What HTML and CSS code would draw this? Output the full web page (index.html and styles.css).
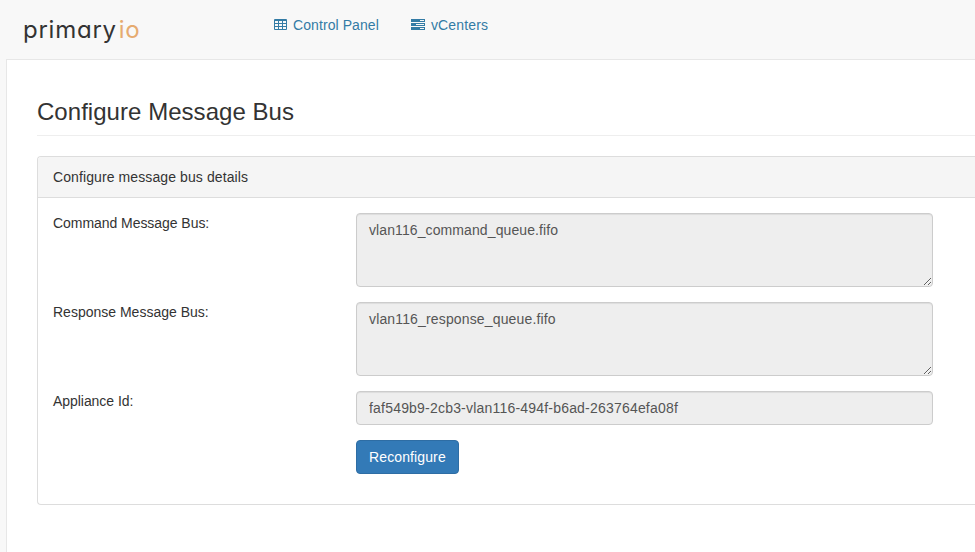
FILE: index.html
```html
<!DOCTYPE html>
<html lang="en">
<head>
<meta charset="utf-8">
<title>Configure Message Bus</title>
<link rel="stylesheet" href="styles.css">
</head>
<body>
<header class="navbar">
  <a class="brand">primary<span class="brand-io">io</span></a>
  <nav class="nav">
    <a class="nav-link"><svg class="icon" width="13" height="12" viewBox="0 0 13 12"><path fill="currentColor" fill-rule="evenodd" d="M1 0h11a1 1 0 0 1 1 1v9a1 1 0 0 1-1 1H1a1 1 0 0 1-1-1V1a1 1 0 0 1 1-1zM1 2v2h3V2zM5 2v2h3V2zM9 2v2h3V2zM1 5v2h3V5zM5 5v2h3V5zM9 5v2h3V5zM1 8v2h3V8zM5 8v2h3V8zM9 8v2h3V8z"/></svg><span class="t-control">Control Panel</span></a>
    <a class="nav-link"><svg class="icon" width="14" height="12" viewBox="0 0 14 12"><path fill="currentColor" fill-rule="evenodd" d="M0 0h14v3H0zM0 4h14v3H0zM0 8h14v3H0zM9 1v1h4V1zM5 5v1h8V5zM9 9v1h4V9z"/></svg><span class="t-vcenters">vCenters</span></a>
  </nav>
</header>
<main class="page">
  <h1 class="page-title"><span class="t-title">Configure Message Bus</span></h1>
  <section class="panel">
    <div class="panel-heading"><span class="t-heading">Configure message bus details</span></div>
    <form class="panel-body">
      <label class="label"><span class="t-command">Command Message Bus:</span></label>
      <textarea class="control area t-cmdvalue" readonly>vlan116_command_queue.fifo</textarea>
      <label class="label"><span>Response Message Bus:</span></label>
      <textarea class="control area t-respvalue" readonly>vlan116_response_queue.fifo</textarea>
      <label class="label"><span class="t-appliance">Appliance Id:</span></label>
      <input class="control t-idvalue" readonly value="faf549b9-2cb3-vlan116-494f-b6ad-263764efa08f">
      <button class="button" type="button"><span class="t-button">Reconfigure</span></button>
    </form>
  </section>
</main>
</body>
</html>
```
FILE: styles.css
```css
* { box-sizing: border-box; }
body {
  margin: 0;
  height: 552px;
  overflow: hidden;
  background: #f8f8f8;
  color: #333;
  font: 14px/20px "Liberation Sans", Arial, sans-serif;
}
.navbar { display: flex; height: 59px; padding-left: 23px; }
.brand {
  width: 251px;
  padding-top: 14px;
  font: 400 24px/32px Inter, sans-serif;
  font-feature-settings: "cv11";
  letter-spacing: 0.75px;
  color: #333;
}
.brand-io { margin-left: 2px; color: #e6ab70; }
.nav { display: flex; gap: 32px; padding-top: 15px; }
.nav-link { display: flex; height: 20px; color: #337ba5; }
.icon { margin: 4px 6px 0 0; }
.page {
  height: 493px;
  margin-left: 6px;
  padding: 40px 0 0 30px;
  background: #fff;
  border: solid #e7e7e7;
  border-width: 1px 0 0 1px;
}
.page-title {
  height: 36px;
  margin: 0 0 20px;
  border-bottom: 1px solid #eee;
  font-size: 24px;
  font-weight: 400;
  line-height: 24px;
}
.panel {
  height: 349px;
  border: solid #ddd;
  border-width: 1px 0 1px 1px;
  border-radius: 4px 0 0 4px;
}
.panel-heading {
  height: 41px;
  padding: 10px 15px;
  background: #f5f5f5;
  border-bottom: 1px solid #ddd;
  border-radius: 3px 0 0 0;
}
.panel-body {
  display: grid;
  grid-template-columns: 303px 577px;
  row-gap: 15px;
  padding: 15px;
}
.label { height: 20px; }
.control {
  display: block;
  width: 100%;
  height: 34px;
  margin: 0;
  padding: 6px 12px;
  background: #eee;
  border: 1px solid #ccc;
  border-radius: 4px;
  box-shadow: inset 0 1px 1px rgba(0, 0, 0, .075);
  color: #555;
  font: inherit;
  outline: 0;
}
.area { height: 74px; resize: vertical; }
.button {
  grid-column: 2;
  width: 103px;
  height: 34px;
  padding: 0 12px;
  background: #337ab7;
  border: 1px solid #2e6da4;
  border-radius: 4px;
  color: #fff;
  font: inherit;
  text-align: left;
}
.t-control { letter-spacing: .08px; }
.t-vcenters { letter-spacing: .15px; }
.t-title { letter-spacing: .04px; }
.t-heading { letter-spacing: .1px; }
.t-command { letter-spacing: -.05px; }
.t-appliance { letter-spacing: -.05px; }
.t-cmdvalue { letter-spacing: .1px; }
.t-respvalue { letter-spacing: .15px; }
.t-idvalue { letter-spacing: .2px; }
.t-button { letter-spacing: .12px; }
```
